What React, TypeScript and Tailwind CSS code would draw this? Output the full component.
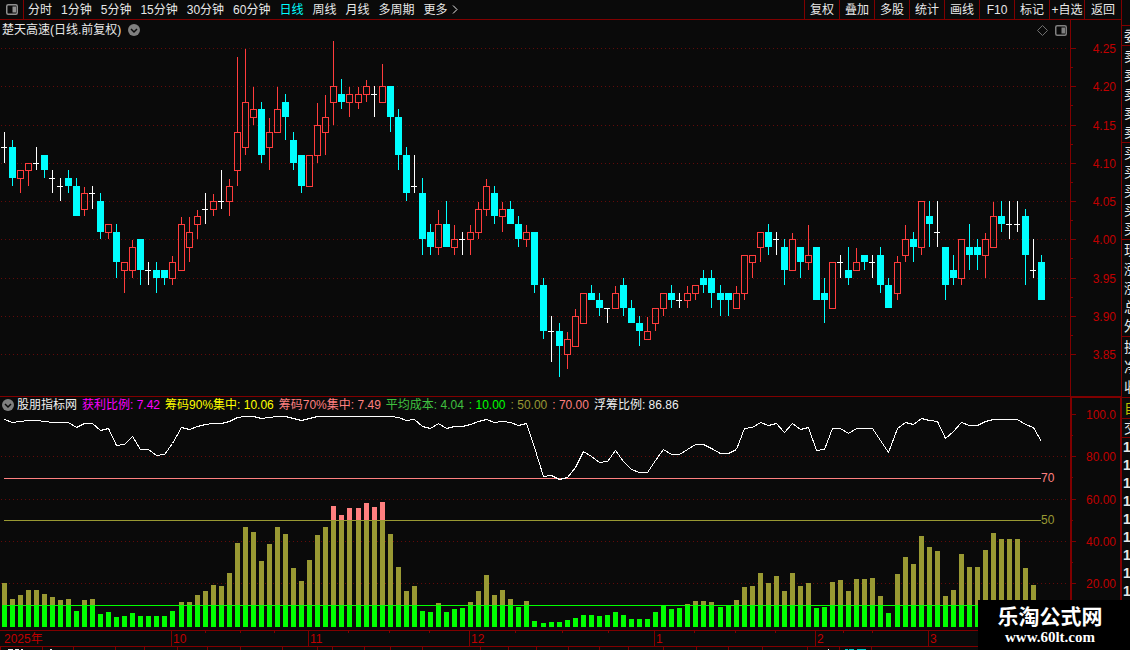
import { clsx } from "clsx"

type Candle = [open: number, high: number, low: number, close: number]

const PERIODS = ["分时", "1分钟", "5分钟", "15分钟", "30分钟", "60分钟", "日线", "周线", "月线", "多周期"]
const TOOLS = ["复权", "叠加", "多股", "统计", "画线", "F10", "标记", "+自选", "返回"]

const LEGEND = [
  { text: "获利比例: 7.42", className: "text-[#ff00ff]" },
  { text: "筹码90%集中: 10.06", className: "text-[#ffff00]" },
  { text: "筹码70%集中: 7.49", className: "text-[#ff8080]" },
  { text: "平均成本: 4.04", className: "text-[#40c040]" },
  { text: ": 10.00", className: "text-[#00ff00]" },
  { text: ": 50.00", className: "text-[#999933]" },
  { text: ": 70.00", className: "text-[#ff8080]" },
  { text: "浮筹比例: 86.86", className: "text-[#f0f0f0]" },
]

// Prices in cents
const CANDLES: Candle[] = [
  [412, 414, 410, 412], [412, 413, 407, 408], [408, 409, 406, 409], [409, 410, 407, 410], [410, 412, 409, 410],
  [411, 411, 408, 409], [408, 409, 406, 408], [407, 408, 405, 407], [408, 409, 406, 407], [407, 408, 403, 403],
  [404, 407, 403, 406], [406, 407, 404, 406], [405, 406, 400, 401], [401, 402, 400, 402], [401, 402, 395, 397],
  [396, 397, 393, 397], [396, 400, 395, 399], [400, 400, 394, 396], [396, 397, 394, 396], [396, 397, 393, 395],
  [396, 396, 394, 395], [395, 398, 394, 397], [396, 403, 396, 402], [399, 403, 397, 401], [402, 404, 400, 403],
  [404, 406, 402, 404], [404, 406, 403, 405], [405, 409, 404, 405], [405, 408, 403, 407], [409, 424, 407, 414],
  [412, 425, 411, 418], [416, 420, 415, 417], [417, 418, 410, 411], [412, 416, 409, 414], [414, 420, 414, 417],
  [418, 419, 413, 416], [413, 414, 409, 410], [411, 411, 406, 407], [407, 411, 407, 411], [411, 418, 410, 415],
  [414, 419, 411, 416], [418, 426, 415, 420], [419, 421, 417, 418], [418, 420, 416, 419], [418, 420, 417, 419],
  [419, 421, 418, 420], [419, 420, 416, 419], [418, 423, 418, 420], [420, 420, 414, 416], [416, 417, 409, 411],
  [411, 412, 405, 406], [407, 411, 406, 407], [406, 408, 398, 400], [401, 402, 398, 399], [399, 404, 398, 402],
  [402, 405, 399, 399], [399, 402, 398, 400], [400, 401, 398, 400], [400, 402, 398, 401], [401, 405, 400, 404],
  [404, 408, 403, 407], [406, 407, 402, 403], [403, 405, 401, 404], [404, 405, 402, 402], [402, 403, 399, 400],
  [400, 402, 399, 401], [401, 401, 393, 394], [394, 395, 387, 388], [388, 390, 384, 388], [388, 389, 382, 386],
  [385, 388, 383, 387], [386, 391, 386, 390], [389, 393, 389, 393], [393, 394, 392, 392], [392, 393, 390, 391],
  [391, 391, 389, 391], [391, 394, 391, 393], [394, 395, 390, 391], [391, 392, 389, 389], [389, 390, 386, 388],
  [387, 390, 387, 388], [389, 391, 388, 391], [391, 393, 390, 393], [393, 394, 391, 392], [392, 393, 391, 392],
  [392, 394, 391, 393], [393, 394, 392, 394], [395, 396, 393, 394], [395, 396, 391, 393], [393, 394, 390, 392],
  [393, 393, 390, 392], [391, 394, 391, 393], [393, 398, 392, 398], [397, 398, 395, 398], [399, 401, 397, 401],
  [401, 402, 398, 399], [400, 401, 398, 400], [399, 400, 394, 396], [396, 401, 396, 400], [399, 399, 395, 397],
  [397, 402, 396, 398], [399, 399, 392, 392], [393, 395, 389, 392], [391, 397, 391, 397], [397, 398, 395, 397],
  [396, 399, 394, 395], [396, 399, 396, 397], [398, 398, 396, 397], [397, 398, 395, 397], [398, 399, 393, 394],
  [394, 395, 391, 391], [393, 398, 392, 397], [398, 402, 397, 400], [400, 401, 397, 399], [399, 405, 398, 405],
  [403, 405, 399, 402], [401, 405, 399, 401], [399, 399, 392, 394], [396, 398, 394, 395], [395, 400, 394, 400],
  [399, 402, 396, 398], [399, 400, 396, 398], [398, 401, 395, 400], [399, 405, 399, 403], [403, 405, 401, 402],
  [402, 405, 400, 402], [402, 405, 401, 402], [403, 404, 394, 398], [396, 400, 395, 396], [397, 398, 392, 392],
]

// Bar heights of the profit ratio
const BARS = [
  44, 28, 32, 37, 37, 33, 30, 27, 28, 16, 27, 28, 13, 15, 10, 11, 14, 11, 11, 11, 11, 16, 25, 25, 32, 36, 42, 41, 54,
  84, 100, 95, 66, 83, 100, 93, 59, 46, 67, 92, 100, 121, 112, 119, 119, 124, 120, 125, 93, 60, 36, 41, 16, 15, 24,
  15, 18, 19, 25, 36, 52, 32, 37, 28, 20, 26, 6, 4, 5, 5, 7, 9, 12, 12, 11, 12, 15, 12, 8, 8, 8, 15, 21, 18, 19, 23,
  26, 26, 25, 20, 21, 27, 40, 41, 54, 44, 51, 36, 54, 41, 44, 19, 20, 45, 47, 36, 48, 48, 49, 31, 14, 53, 70, 63, 91,
  80, 76, 31, 37, 73, 60, 60, 77, 94, 88, 88, 88, 59, 42, 16,
]

// Floating chip line, distance from the top of the plot
const LINE = [
  6, 9, 8, 7, 7, 8, 9, 9, 9, 14, 10, 10, 17, 15, 32, 31, 23, 36, 36, 42, 41, 30, 14, 16, 13, 11, 10, 10, 8, 4, 3, 3, 5,
  4, 3, 3, 5, 7, 5, 3, 3, 3, 3, 3, 3, 3, 3, 3, 3, 4, 7, 6, 13, 15, 10, 15, 13, 13, 11, 8, 6, 9, 8, 9, 12, 10, 34, 63,
  62, 66, 64, 54, 38, 43, 49, 48, 37, 48, 56, 59, 59, 47, 36, 41, 41, 36, 31, 31, 35, 40, 40, 36, 15, 14, 9, 12, 10,
  19, 10, 16, 14, 37, 36, 15, 15, 20, 15, 15, 15, 27, 39, 15, 9, 11, 5, 7, 8, 25, 18, 9, 12, 12, 8, 6, 6, 6, 6, 11,
  14, 28,
]

const PRICES = [425, 420, 415, 410, 405, 400, 395, 390, 385]
const LEVELS = [
  { label: "100.0", y: 16 },
  { label: "80.00", y: 58 },
  { label: "60.00", y: 101 },
  { label: "40.00", y: 143 },
  { label: "20.00", y: 185 },
]

const MONTHS = [
  { label: "10", x: 171 },
  { label: "11", x: 308 },
  { label: "12", x: 469 },
  { label: "1", x: 654 },
  { label: "2", x: 815 },
  { label: "3", x: 928 },
]
const WEEK_TICKS = [205, 240, 274, 348, 389, 429, 515, 562, 608, 694, 735, 775, 843, 872]
const TAB_TICKS = [
  0, 42, 73, 115, 144, 177, 207, 240, 282, 317, 332, 364, 390, 422, 480, 508, 536, 568, 599, 628, 663, 696, 728, 762,
  807, 839, 871,
]

const QUOTE_GROUPS = [
  { chars: ["委"], className: "h-5" },
  { chars: ["卖", "卖", "卖", "卖", "卖"], className: "h-[97px]" },
  { chars: ["买", "买", "买", "买", "买"], className: "h-[97px]" },
  { chars: ["现", "涨", "涨", "总", "外"], className: "h-[97px]" },
  { chars: ["换", "净", "收"], className: "h-[61px]" },
  { chars: ["自"], className: "h-[21px] text-[#c0c000]" },
  { chars: ["交"], className: "h-[19px]" },
]

const candleX = (i: number) => Math.floor(4.025 + i * 8.045)
const priceY = (cents: number) => Math.round(8 + (425 - cents) * 7.65)

function PanelIcon({ className }: { className?: string }) {
  return (
    <svg viewBox="0 0 12 11" className={clsx("h-[11px] w-3", className)} aria-hidden="true">
      <rect x="0.75" y="0.75" width="10.5" height="9.5" rx="1.5" fill="none" stroke="currentColor" strokeWidth="1.5" />
      <rect x="6.5" y="2.5" width="3.5" height="6" fill="currentColor" />
    </svg>
  )
}

function CircleChevron() {
  return (
    <svg viewBox="0 0 12 12" className="h-3 w-3 shrink-0" aria-hidden="true">
      <circle cx="6" cy="6" r="6" fill="#808080" />
      <path d="M3 5l3 3 3-3" fill="none" stroke="#0a0a0a" strokeWidth="1.5" />
    </svg>
  )
}

function Toolbar() {
  return (
    <header className="flex h-5 shrink-0 border-b border-[#800000] text-[#e8e8e8]">
      <button aria-label="侧栏" className="flex w-6 shrink-0 items-center justify-center border-r border-[#800000]">
        <PanelIcon className="text-[#909090]" />
      </button>
      <nav className="flex flex-1 items-center gap-[9px] pl-1">
        {PERIODS.map((name) => (
          <button key={name} className={clsx("whitespace-nowrap", name === "日线" && "text-[#00ffff]")}>
            {name}
          </button>
        ))}
        <button className="flex items-center gap-1 whitespace-nowrap">
          更多
          <svg viewBox="0 0 6 9" className="h-[9px] w-[6px]" aria-hidden="true">
            <path d="M1 0.5l4 4-4 4" fill="none" stroke="currentColor" />
          </svg>
        </button>
      </nav>
      <div className="flex">
        {TOOLS.map((name) => (
          <button key={name} className="w-[35px] border-l border-[#800000] text-center whitespace-nowrap last:w-[37px]">
            {name}
          </button>
        ))}
      </div>
    </header>
  )
}

function CandleShape({ candle, x }: { candle: Candle; x: number }) {
  const [open, high, low, close] = candle
  const top = priceY(Math.max(open, close))
  const bottom = priceY(Math.min(open, close))
  const highY = priceY(high)
  const lowY = priceY(low)

  if (open === close) {
    return (
      <g fill="#ffffff">
        <rect x={x} y={highY} width="1" height={lowY - highY} />
        <rect x={x - 3} y={top} width="6" height="1" />
      </g>
    )
  }
  if (close < open) {
    return (
      <g fill="#00ffff">
        <rect x={x} y={highY} width="1" height={lowY - highY} />
        <rect x={x - 3} y={top} width="7" height={bottom - top} />
      </g>
    )
  }
  return (
    <g fill="#ff3c3c">
      {high > close && <rect x={x} y={highY + 1} width="1" height={top - highY} />}
      {low < open && <rect x={x} y={bottom} width="1" height={lowY - bottom} />}
      <rect x={x - 2.5} y={top + 0.5} width="6" height={bottom - top} fill="none" stroke="#ff3c3c" />
    </g>
  )
}

function GridLine({ y }: { y: number }) {
  return <line x1="1" x2="100%" y1={y + 0.5} y2={y + 0.5} stroke="#640a0a" strokeDasharray="1 3" />
}

function PricePane() {
  return (
    <section className="flex min-h-[376px] flex-1">
      <div className="flex min-w-0 flex-1 flex-col">
        <div className="flex h-5 shrink-0 items-center gap-[7px] pr-[3px] pl-[2px] text-[#e8e8e8]">
          <h1>楚天高速(日线.前复权)</h1>
          <CircleChevron />
          <svg viewBox="0 0 11 11" className="ml-auto h-[11px] w-[11px]" aria-hidden="true">
            <path d="M5.5 0.5l5 5-5 5-5-5z" fill="none" stroke="#707070" />
          </svg>
          <PanelIcon className="text-[#808080]" />
        </div>
        <div className="min-h-0 flex-1 pr-1">
          <svg className="block h-full w-full" shapeRendering="crispEdges">
            {PRICES.map((p) => (
              <GridLine key={p} y={priceY(p)} />
            ))}
            {CANDLES.map((candle, i) => (
              <CandleShape key={i} candle={candle} x={candleX(i)} />
            ))}
          </svg>
        </div>
      </div>
      <div className="w-[51px] shrink-0 border-l border-[#800000] pt-5">
        <svg className="block h-full w-full text-xs" shapeRendering="crispEdges">
          {PRICES.map((p) => (
            <g key={p} fill="#800000">
              <rect x="0" y={priceY(p)} width="5" height="1" />
              {p > 385 && <rect x="0" y={priceY(p) + 19} width="2" height="1" />}
              <text x="45" y={priceY(p) + 5} textAnchor="end" fill="#c00000">
                {(p / 100).toFixed(2)}
              </text>
            </g>
          ))}
        </svg>
      </div>
    </section>
  )
}

function ChipPane() {
  const points = LINE.map((y, i) => `${candleX(i) + 0.5},${y + 0.5}`).join(" ")
  return (
    <section className="flex h-[234px] shrink-0 border-t border-[#800000]">
      <div className="flex min-w-0 flex-1 flex-col">
        <div className="flex h-4 shrink-0 items-center gap-[5px] pl-[2px] whitespace-nowrap">
          <CircleChevron />
          <h2 className="-ml-[2px] text-[#f0f0f0]">股朋指标网</h2>
          {LEGEND.map((item) => (
            <span key={item.text} className={item.className}>
              {item.text}
            </span>
          ))}
        </div>
        <div className="min-h-0 flex-1 pr-1">
          <svg className="block h-full w-full text-xs" shapeRendering="crispEdges">
            {[43, 86, 128, 170].map((y) => (
              <GridLine key={y} y={y} />
            ))}
            {BARS.map((h, i) => {
              const x = candleX(i) - 2
              const green = Math.min(h, 22)
              const olive = Math.min(h, 107)
              return (
                <g key={i}>
                  <rect x={x} y={214 - h} width="5" height={h} fill="#ff8080" />
                  <rect x={x} y={214 - olive} width="5" height={olive} fill="#999933" />
                  <rect x={x} y={214 - green} width="5" height={green} fill="#00ff00" />
                </g>
              )
            })}
            <rect x="4" y="192" width="1037" height="1" fill="#00ff00" />
            <rect x="4" y="107" width="1037" height="1" fill="#999933" />
            <rect x="4" y="65" width="1037" height="1" fill="#ff8080" />
            <polyline points={points} fill="none" stroke="#ffffff" />
            <text x="1041" y="69" fill="#ff8080">
              70
            </text>
            <text x="1041" y="111" fill="#999933">
              50
            </text>
          </svg>
        </div>
      </div>
      <div className="w-[51px] shrink-0 border-t border-r border-l-2 border-[#800000]">
        <svg className="block h-full w-full text-xs" shapeRendering="crispEdges">
          {LEVELS.map(({ label, y }) => (
            <g key={label} fill="#800000">
              <rect x="0" y={y} width="4" height="1" />
              <rect x="0" y={y + 21} width="1" height="1" />
              <text x="44" y={y + 5} textAnchor="end" fill="#c00000">
                {label}
              </text>
            </g>
          ))}
        </svg>
      </div>
    </section>
  )
}

function TimeAxis() {
  return (
    <footer className="shrink-0 border-t border-[#800000]">
      <svg className="block h-[15px] w-full text-xs" shapeRendering="crispEdges">
        <text x="4" y="12" fill="#c00000">
          2025年
        </text>
        {MONTHS.map(({ label, x }) => (
          <g key={label}>
            <rect x={x} y="0" width="1" height="15" fill="#800000" />
            <text x={x + 2} y="12" fill="#c00000">
              {label}
            </text>
          </g>
        ))}
        {WEEK_TICKS.map((x) => (
          <rect key={x} x={x} y="0" width="1" height="2" fill="#800000" />
        ))}
      </svg>
      <svg className="block h-1 w-full border-t border-[#800000]" shapeRendering="crispEdges">
        {TAB_TICKS.map((x) => (
          <rect key={x} x={x} y="0" width="1" height="3" fill="#800000" />
        ))}
        <path d="M8 2.5h5M15 2.5h4M21 2.5h2M50 2.5h2M828 2.5h1" stroke="#e8e8e8" />
        <path d="M845 2.5h3M849 2.5h5M857 2.5h9" stroke="#00c8c8" />
      </svg>
    </footer>
  )
}

function QuoteStrip() {
  return (
    <aside className="w-[9px] shrink-0 overflow-hidden border-l border-[#800000] pt-[25px] text-sm text-[#e8e8e8]">
      {QUOTE_GROUPS.map(({ chars, className }) => (
        <div
          key={chars[0]}
          className={clsx("flex flex-col justify-around border-t border-[#800000] pl-[2px] leading-4", className)}
        >
          {chars.map((char, i) => (
            <span key={i}>{char}</span>
          ))}
        </div>
      ))}
      <div className="flex flex-col border-t border-[#800000] pl-px leading-[18px] font-bold">
        {Array.from({ length: 9 }, (_, i) => (
          <span key={i}>1</span>
        ))}
      </div>
    </aside>
  )
}

export default function App() {
  return (
    <div className="relative flex h-screen w-full overflow-hidden bg-[#0a0a0a] font-['Liberation_Sans','Noto_Sans_CJK_SC',sans-serif] text-xs">
      <main className="flex min-w-0 flex-1 flex-col">
        <Toolbar />
        <PricePane />
        <ChipPane />
        <TimeAxis />
      </main>
      <QuoteStrip />
      <div className="absolute right-0 bottom-0 flex h-[50px] w-[152px] flex-col items-center justify-center bg-black pr-2 font-bold text-white">
        <p className="text-[21px] leading-6">乐淘公式网</p>
        <a href="#" className="font-['Liberation_Serif',serif] text-[15px] leading-4">
          www.60lt.com
        </a>
      </div>
    </div>
  )
}
